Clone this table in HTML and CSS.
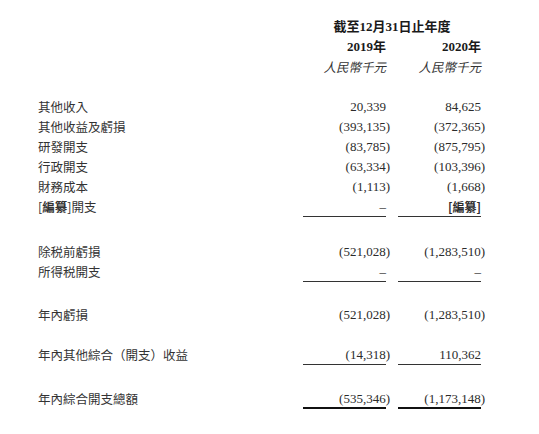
FILE: index.html
```html
<!DOCTYPE html>
<html lang="zh-Hant">
<head>
<meta charset="utf-8">
<link rel="stylesheet" href="styles.css">
</head>
<body>
<div class="sheet">
  <div class="row head">
    <div></div>
    <div class="span2 bold">截至12月31日止年度</div>
  </div>
  <div class="row head">
    <div></div>
    <div class="num bold">2019年</div>
    <div class="num bold">2020年</div>
  </div>
  <div class="row head">
    <div></div>
    <div class="num unit">人民幣千元</div>
    <div class="num unit">人民幣千元</div>
  </div>

  <div class="group g1">
    <div class="row"><div class="label">其他收入</div><div class="num">20,339</div><div class="num">84,625</div></div>
    <div class="row"><div class="label">其他收益及虧損</div><div class="num">(393,135<span class="p">)</span></div><div class="num">(372,365<span class="p">)</span></div></div>
    <div class="row"><div class="label">研發開支</div><div class="num">(83,785<span class="p">)</span></div><div class="num">(875,795<span class="p">)</span></div></div>
    <div class="row"><div class="label">行政開支</div><div class="num">(63,334<span class="p">)</span></div><div class="num">(103,396<span class="p">)</span></div></div>
    <div class="row"><div class="label">財務成本</div><div class="num">(1,113<span class="p">)</span></div><div class="num">(1,668<span class="p">)</span></div></div>
    <div class="row"><div class="label">[<b>編纂</b>]開支</div><div class="num line">–</div><div class="num line cjk"><b>[編纂]</b></div></div>
  </div>

  <div class="group g2">
    <div class="row"><div class="label">除税前虧損</div><div class="num">(521,028<span class="p">)</span></div><div class="num">(1,283,510<span class="p">)</span></div></div>
    <div class="row"><div class="label">所得税開支</div><div class="num line">–</div><div class="num line">–</div></div>
  </div>

  <div class="group g3">
    <div class="row"><div class="label">年內虧損</div><div class="num">(521,028<span class="p">)</span></div><div class="num">(1,283,510<span class="p">)</span></div></div>
  </div>

  <div class="group g4">
    <div class="row"><div class="label">年內其他綜合（開支）收益</div><div class="num line">(14,318<span class="p">)</span></div><div class="num line">110,362</div></div>
  </div>

  <div class="group g5">
    <div class="row"><div class="label">年內綜合開支總額</div><div class="num dbl">(535,346<span class="p">)</span></div><div class="num dbl">(1,173,148<span class="p">)</span></div></div>
  </div>
</div>
</body>
</html>
```

FILE: styles.css
```css
html, body {
  margin: 0;
  padding: 0;
  background: #fff;
}
body {
  color: #2b2b2b;
  font-family: "Liberation Serif", "Noto Sans CJK TC", serif;
  font-size: 13px;
}
.sheet {
  padding: 17px 0 0 38px;
}
.row {
  display: grid;
  grid-template-columns: 253px 83px 83px;
  column-gap: 12px;
  height: 20px;
  align-items: center;
}
.row > div {
  height: 20px;
  line-height: 20px;
  box-sizing: border-box;
}
.label {
  font-family: "Noto Sans CJK TC", sans-serif;
  font-size: 12.5px;
  color: #333;
}
.label b {
  font-weight: 700;
}
.span2 {
  grid-column: 2 / 4;
  text-align: center;
  font-family: "Liberation Serif", "Noto Sans CJK TC", serif;
  font-size: 13px;
}
.bold {
  font-weight: 700;
  color: #1a1a1a;
}
.num {
  text-align: right;
  white-space: nowrap;
}
.unit {
  font-family: "Noto Sans CJK TC", sans-serif;
  font-size: 12.5px;
  font-style: italic;
  color: #333;
}
.cjk {
  font-family: "Noto Sans CJK TC", sans-serif;
  font-size: 12px;
}
.p {
  margin-right: -4px;
}
.line {
  border-bottom: 1px solid #333;
}
.dbl {
  border-bottom: 2px solid #111;
  box-shadow: 0 2px 0 #fff, 0 3px 0 #111;
}
.g1 { margin-top: 20px; }
.g2 { margin-top: 25px; }
.g3 { margin-top: 23px; }
.g4 { margin-top: 20px; }
.g5 { margin-top: 24px; }
```
